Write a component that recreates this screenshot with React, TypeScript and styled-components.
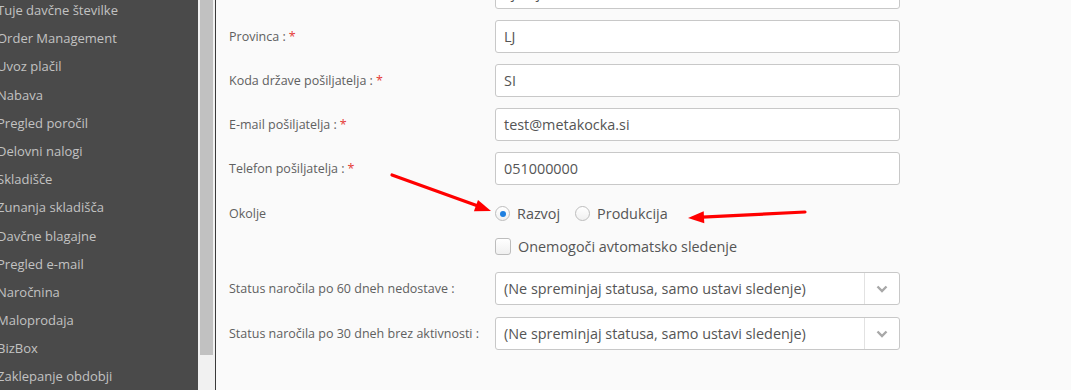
import styled, { createGlobalStyle } from 'styled-components';

const GlobalStyle = createGlobalStyle`
  html, body {
    margin: 0;
    padding: 0;
    background: #fafafa;
    font-family: 'Open Sans', 'Liberation Sans', sans-serif;
  }
  * {
    box-sizing: border-box;
  }
`;

const Page = styled.div`
  position: relative;
  display: flex;
  width: 1071px;
  height: 390px;
  overflow: hidden;
`;

const Sidebar = styled.nav`
  width: 198px;
  flex-shrink: 0;
  background: #4a4a4a;
  overflow: hidden;
`;

const NavList = styled.ul`
  list-style: none;
  margin: -4px 0 0 -3px;
  padding: 0;
`;

const NavItem = styled.li`
  height: 28.2px;
  line-height: 28px;
  font-size: 13px;
  color: #c2c2c2;
  white-space: nowrap;
`;

const ScrollTrack = styled.div`
  width: 17px;
  flex-shrink: 0;
  background: #f1f1f1;
  padding-left: 2px;
`;

const ScrollThumb = styled.div`
  width: 13px;
  height: 355px;
  background: #c1c1c1;
`;

const Divider = styled.div`
  width: 1px;
  flex-shrink: 0;
  background: #3a3a3a;
`;

const Main = styled.main`
  flex: 1;
  background: #fafafa;
  padding-left: 13px;
`;

const Form = styled.div`
  display: flex;
  flex-direction: column;
  margin-top: -24px;
`;

const Row = styled.div<{ $mt?: number; $h?: number }>`
  display: flex;
  align-items: center;
  margin-top: ${({ $mt }) => $mt ?? 0}px;
  min-height: ${({ $h }) => $h ?? 33}px;
`;

const Label = styled.label`
  width: 266px;
  flex-shrink: 0;
  font-size: 12.5px;
  color: #606060;
  white-space: nowrap;
`;

const Required = styled.span`
  color: #e53935;
  margin-left: 3px;
`;

const Field = styled.div`
  width: 405px;
  height: 33px;
  border: 1px solid #c8c8c8;
  border-radius: 3px;
  background: #fff;
  display: flex;
  align-items: center;
  padding-left: 8px;
  font-size: 14.4px;
  color: #555;
`;

const SelectBox = styled(Field)`
  padding-left: 0;
`;

const SelectText = styled.span`
  flex: 1;
  padding-left: 8px;
  white-space: nowrap;
`;

const SelectArrow = styled.span`
  width: 35px;
  height: 100%;
  border-left: 1px solid #e2e2e2;
  display: flex;
  align-items: center;
  justify-content: center;
`;

const Options = styled.div`
  display: flex;
  align-items: center;
  font-size: 14.4px;
  color: #555;
`;

const Radio = styled.span<{ $checked?: boolean }>`
  width: 15px;
  height: 15px;
  border-radius: 50%;
  border: 1px solid #bdbdbd;
  background: linear-gradient(#fff, #f0f0f0);
  display: flex;
  align-items: center;
  justify-content: center;
  margin: 0 7px 0 ${({ $checked }) => ($checked ? 0 : 15)}px;

  &::after {
    content: '';
    width: 6px;
    height: 6px;
    border-radius: 50%;
    background: ${({ $checked }) => ($checked ? '#1e7fe0' : 'transparent')};
  }
`;

const Checkbox = styled.span`
  width: 16px;
  height: 17px;
  border: 1px solid #bdbdbd;
  border-radius: 3px;
  background: linear-gradient(#fff, #f0f0f0);
  margin-right: 7px;
`;

const Spacer = styled.span`
  width: 266px;
  flex-shrink: 0;
`;

const Overlay = styled.svg`
  position: absolute;
  inset: 0;
  pointer-events: none;
`;

const navItems = [
  'Tuje davčne številke',
  'Order Management',
  'Uvoz plačil',
  'Nabava',
  'Pregled poročil',
  'Delovni nalogi',
  'Skladišče',
  'Zunanja skladišča',
  'Davčne blagajne',
  'Pregled e-mail',
  'Naročnina',
  'Maloprodaja',
  'BizBox',
  'Zaklepanje obdobji',
];

const fields = [
  { label: 'Provinca :', value: 'LJ' },
  { label: 'Koda države pošiljatelja :', value: 'SI' },
  { label: 'E-mail pošiljatelja :', value: 'test@metakocka.si' },
  { label: 'Telefon pošiljatelja :', value: '051000000' },
];

const statusText = '(Ne spreminjaj statusa, samo ustavi sledenje)';

const Chevron = () => (
  <svg width="12" height="8" viewBox="0 0 12 8">
    <polyline points="1.5,1.5 6,6 10.5,1.5" fill="none" stroke="#a8a8a8" strokeWidth="2.4" />
  </svg>
);

const App = () => (
  <>
    <GlobalStyle />
    <Page>
      <Sidebar>
        <NavList>
          {navItems.map((item) => (
            <NavItem key={item}>{item}</NavItem>
          ))}
        </NavList>
      </Sidebar>
      <ScrollTrack>
        <ScrollThumb />
      </ScrollTrack>
      <Divider />
      <Main>
        <Form>
          <Row>
            <Label>Mesto :<Required>*</Required></Label>
            <Field>Ljubljana</Field>
          </Row>
          {fields.map((f) => (
            <Row key={f.label} $mt={11}>
              <Label>
                {f.label}
                <Required>*</Required>
              </Label>
              <Field>{f.value}</Field>
            </Row>
          ))}
          <Row $mt={12}>
            <Label>Okolje</Label>
            <Options>
              <Radio $checked />
              Razvoj
              <Radio />
              Produkcija
            </Options>
          </Row>
          <Row>
            <Spacer />
            <Options>
              <Checkbox />
              Onemogoči avtomatsko sledenje
            </Options>
          </Row>
          <Row $mt={9}>
            <Label>Status naročila po 60 dneh nedostave :</Label>
            <SelectBox>
              <SelectText>{statusText}</SelectText>
              <SelectArrow>
                <Chevron />
              </SelectArrow>
            </SelectBox>
          </Row>
          <Row $mt={12}>
            <Label>Status naročila po 30 dneh brez aktivnosti :</Label>
            <SelectBox>
              <SelectText>{statusText}</SelectText>
              <SelectArrow>
                <Chevron />
              </SelectArrow>
            </SelectBox>
          </Row>
        </Form>
      </Main>
      <Overlay width="1071" height="390" viewBox="0 0 1071 390">
        <line x1="392" y1="175" x2="478" y2="206" stroke="#f00" strokeWidth="3.2" strokeLinecap="round" />
        <polygon points="491,211 473.9,211.2 478,199.9" fill="#f00" />
        <line x1="805" y1="212" x2="702" y2="217.2" stroke="#f00" strokeWidth="3.2" strokeLinecap="round" />
        <polygon points="688,218 703.7,211.2 704.3,223.2" fill="#f00" />
      </Overlay>
    </Page>
  </>
);

export default App;
